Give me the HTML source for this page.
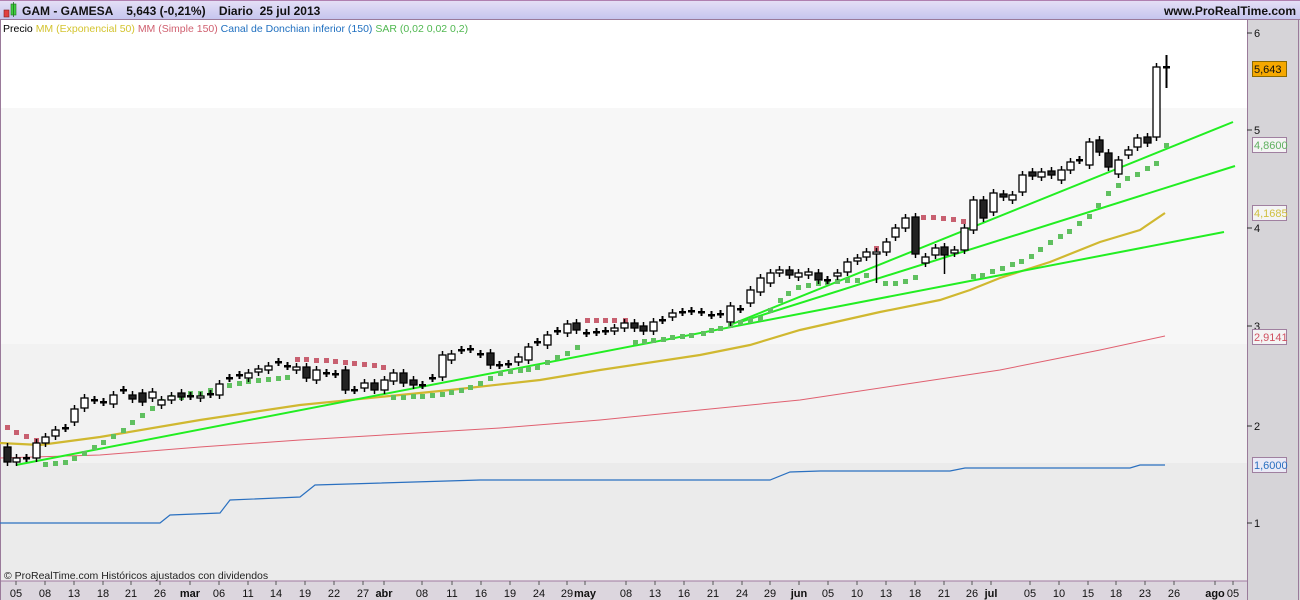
<!DOCTYPE html>
<html><head><meta charset="utf-8"><style>
html,body{margin:0;padding:0;width:1300px;height:600px;overflow:hidden;background:#fff;font-family:"Liberation Sans",Arial,sans-serif}
svg{display:block}
</style></head><body>
<svg id="s" width="1300" height="600" xmlns="http://www.w3.org/2000/svg" font-family="Liberation Sans, Arial, sans-serif">
<defs><linearGradient id="tb" x1="0" y1="0" x2="0" y2="1"><stop offset="0" stop-color="#e6e0f6"/><stop offset="1" stop-color="#c4c4ee"/></linearGradient></defs>
<rect x="0" y="0" width="1300" height="600" fill="#d6d4d8"/>
<rect x="0" y="20" width="1247" height="88" fill="#ffffff"/>
<rect x="0" y="108" width="1247" height="236" fill="#f7f7f7"/>
<rect x="0" y="344" width="1247" height="119" fill="#f2f2f2"/>
<rect x="0" y="463" width="1247" height="118" fill="#ebebeb"/>
<rect x="0" y="581" width="1247" height="19" fill="#dcd6de"/>
<line x1="0" y1="581" x2="1247" y2="581" stroke="#a07aa0"/>
<line x1="1247.5" y1="20" x2="1247.5" y2="600" stroke="#9a7a9a"/>
<line x1="0.5" y1="20" x2="0.5" y2="600" stroke="#9a7a9a"/>
<line x1="1298.5" y1="0" x2="1298.5" y2="600" stroke="#9a7a9a"/>
<rect x="0" y="0" width="1300" height="20" fill="url(#tb)"/>
<line x1="0" y1="0.5" x2="1300" y2="0.5" stroke="#b080b0"/>
<line x1="0" y1="19.5" x2="1300" y2="19.5" stroke="#9a7a9a"/>
<rect x="4" y="10" width="5" height="7" fill="#e04040" stroke="#802020" stroke-width="0.6"/>
<rect x="11" y="4" width="5" height="11" fill="#40d040" stroke="#207020" stroke-width="0.6"/>
<line x1="13.5" y1="2" x2="13.5" y2="17" stroke="#207020" stroke-width="0.8"/>
<text x="22" y="15" font-size="12" font-weight="bold" fill="#111">GAM - GAMESA &#160;&#160; 5,643 (-0,21%) &#160;&#160; Diario &#160;25 jul 2013</text>
<text x="1296" y="15" font-size="12" font-weight="bold" fill="#111" text-anchor="end">www.ProRealTime.com</text>
<text x="3" y="32" font-size="10.5"><tspan fill="#000">Precio </tspan><tspan fill="#d4c430">MM (Exponencial 50) </tspan><tspan fill="#d06070">MM (Simple 150) </tspan><tspan fill="#2070c0">Canal de Donchian inferior (150) </tspan><tspan fill="#50b850">SAR (0,02 0,02 0,2)</tspan></text>
<text x="4" y="579" font-size="10.5" fill="#222">© ProRealTime.com  Históricos ajustados con dividendos</text>
<g id="g"></g>
</svg>
<script>
var g=document.getElementById('g'),h='';
function pl(p,c,w){h+='<polyline fill="none" stroke="'+c+'" stroke-width="'+w+'" points="'+p+'"/>';}
pl("0,523 160,523 170,515 220,513 230,500 300,497 315,485 480,480 770,480 790,472 820,471 950,471 965,468 1130,468 1140,465 1165,465","#2a70c0",1.2);
pl("0,458 100,455 200,447 300,440 400,434 500,428 600,420 700,410 800,400 900,385 1000,370 1050,360 1100,350 1165,336","#e06070",1);
pl("0,443 40,445 100,437 200,420 300,405 400,395 450,390 540,380 600,370 700,355 750,345 800,330 880,312 940,300 970,290 1000,278 1050,262 1100,242 1140,230 1165,213","#d0b830",2.2);
h+='<line x1="16" y1="465" x2="1224" y2="232" stroke="#22ee22" stroke-width="2"/>';
h+='<line x1="730" y1="325" x2="1233" y2="122" stroke="#22ee22" stroke-width="2"/>';
h+='<line x1="740" y1="322" x2="1235" y2="166" stroke="#22ee22" stroke-width="2"/>';
var red=[[7,427],[16,432],[26,436],[36,440],[297,359],[306,359],[316,360],[326,360],[335,361],[345,362],[354,363],[364,364],[374,365],[383,367],[587,320],[596,320],[605,320],[614,320],[625,320],[876,248],[923,217],[933,217],[943,218],[953,219],[963,221]];
var gr=[[45,464],[55,463],[65,462],[74,458],[84,453],[94,447],[103,442],[113,436],[123,430],[132,422],[142,415],[152,408],[161,401],[171,397],[181,397],[190,393],[200,393],[210,390],[219,387],[229,385],[239,383],[248,381],[258,380],[268,379],[278,378],[287,377],[393,397],[403,397],[413,396],[422,396],[432,395],[442,394],[451,392],[461,390],[470,387],[480,383],[490,378],[500,373],[510,371],[520,370],[528,369],[537,367],[547,362],[557,357],[567,353],[577,347],[635,342],[644,341],[653,340],[663,339],[672,337],[682,336],[691,335],[703,333],[711,330],[720,328],[730,325],[740,322],[750,320],[760,318],[770,310],[780,300],[788,293],[798,287],[808,285],[818,283],[827,282],[837,281],[847,280],[857,280],[866,275],[885,283],[895,283],[905,281],[915,277],[973,276],[982,275],[992,271],[1002,268],[1012,264],[1021,261],[1031,256],[1040,249],[1050,242],[1060,236],[1069,231],[1079,223],[1089,216],[1098,205],[1108,193],[1118,185],[1127,178],[1137,174],[1147,168],[1156,163],[1166,145]];
red.forEach(function(d){h+='<rect x="'+(d[0]-2)+'" y="'+(d[1]-2)+'" width="5" height="5" fill="#c86070"/>';});
gr.forEach(function(d){h+='<rect x="'+(d[0]-2)+'" y="'+(d[1]-2)+'" width="5" height="5" fill="#60c060"/>';});
// candles: x, top, bottom, type (w/b/c)
var c=[[7,447,462,'b'],[16,458,462,'w'],[26,458,458,'c'],[36,443,458,'w'],[45,437,443,'w'],[55,430,436,'w'],[65,428,428,'c'],[74,409,422,'w'],[84,398,408,'w'],[94,400,400,'c'],[103,402,402,'c'],[113,395,404,'w'],[123,390,390,'c'],[132,395,399,'b'],[142,393,402,'b'],[152,392,398,'w'],[161,400,405,'w'],[171,396,400,'w'],[181,393,397,'b'],[190,396,396,'c'],[200,396,398,'w'],[210,394,394,'c'],[219,384,395,'w'],[229,378,378,'c'],[239,375,375,'c'],[248,373,378,'w'],[258,369,372,'w'],[268,366,370,'w'],[278,362,362,'c'],[287,366,366,'c'],[296,367,370,'w'],[306,367,378,'b'],[316,370,380,'w'],[326,373,373,'c'],[335,374,374,'c'],[345,370,390,'b'],[354,390,390,'c'],[364,383,388,'w'],[374,383,390,'b'],[384,380,390,'w'],[393,373,381,'w'],[403,373,383,'b'],[413,380,385,'b'],[422,385,385,'c'],[432,378,378,'c'],[442,355,377,'w'],[451,354,360,'w'],[461,350,350,'c'],[470,349,349,'c'],[480,354,354,'c'],[490,353,365,'b'],[499,365,365,'c'],[508,364,364,'c'],[518,357,362,'w'],[528,347,360,'w'],[537,342,342,'c'],[547,335,345,'w'],[557,331,331,'c'],[567,324,333,'w'],[576,323,330,'b'],[586,333,333,'c'],[596,332,332,'c'],[605,331,331,'c'],[614,328,331,'w'],[624,323,328,'w'],[634,323,328,'b'],[643,326,331,'b'],[653,322,331,'w'],[662,320,320,'c'],[672,313,317,'w'],[682,312,312,'c'],[691,311,311,'c'],[701,312,312,'c'],[711,315,315,'c'],[720,314,314,'c'],[730,306,322,'w'],[740,309,309,'c'],[750,290,303,'w'],[760,278,292,'w'],[770,273,283,'w'],[779,270,273,'w'],[789,270,275,'b'],[798,273,277,'w'],[808,272,275,'w'],[818,273,280,'b'],[827,280,280,'c'],[837,273,276,'w'],[847,262,272,'w'],[857,258,261,'w'],[866,252,257,'w'],[876,252,254,'w'],[886,242,252,'w'],[895,228,237,'w'],[905,218,228,'w'],[915,217,254,'b'],[925,257,263,'w'],[935,248,255,'w'],[944,247,255,'b'],[954,250,253,'w'],[964,228,250,'w'],[973,200,230,'w'],[983,200,218,'b'],[993,193,212,'w'],[1003,194,197,'b'],[1012,195,200,'w'],[1022,175,192,'w'],[1032,172,176,'b'],[1041,172,177,'w'],[1051,171,175,'b'],[1061,170,180,'w'],[1070,162,170,'w'],[1079,160,160,'c'],[1089,142,165,'w'],[1099,140,152,'b'],[1108,153,167,'b'],[1118,160,174,'w'],[1128,150,155,'w'],[1137,138,147,'w'],[1147,137,143,'b'],[1156,67,137,'w'],[1166,67,67,'c']];
c.forEach(function(d){var x=d[0],t=d[1],b=d[2];var wt=t-4,wb=b+4;if(x==876)wb=283;if(x==1166){wt=55;wb=88;}if(x==915)wb=258;if(x==944)wb=274;
h+='<line x1="'+(x+0.5)+'" y1="'+wt+'" x2="'+(x+0.5)+'" y2="'+wb+'" stroke="#000" stroke-width="'+(d[3]=='c'?2:1.5)+'"/>';
if(d[3]=='c')h+='<rect x="'+(x-3)+'" y="'+(t-1)+'" width="7" height="2.5" fill="#000"/>';
else h+='<rect x="'+(x-3)+'" y="'+t+'" width="7" height="'+Math.max(b-t,2)+'" fill="'+(d[3]=='w'?'#fff':'#222')+'" stroke="#000" stroke-width="1.3"/>';});
// right axis
[[6,33],[5,130],[4,228],[3,326],[2,426],[1,523]].forEach(function(a){h+='<line x1="1247" y1="'+a[1]+'" x2="1252" y2="'+a[1]+'" stroke="#333"/><text x="1254" y="'+(a[1]+4)+'" font-size="11" fill="#111">'+a[0]+'</text>';});
[[ '5,643',61,'#f5a800','#8a6a00','#111'],['4,8600',137,'#f4f4f4','#a080a0','#60b060'],['4,1685',205,'#f4f4f4','#a080a0','#d0c040'],['2,9141',329,'#f4f4f4','#a080a0','#d05060'],['1,6000',457,'#eaeaf6','#a080a0','#2a70c0']].forEach(function(b){h+='<rect x="1252.5" y="'+b[1]+'.5" width="34" height="15" fill="'+b[2]+'" stroke="'+b[3]+'"/><text x="1254" y="'+(b[1]+12)+'" font-size="11" fill="'+b[4]+'">'+b[0]+'</text>';});
// bottom axis
var L=[['05',16],['08',45],['13',74],['18',103],['21',131],['26',160],['mar',190,1],['06',219],['11',248],['14',276],['19',305],['22',334],['27',363],['abr',384,1],['08',422],['11',452],['16',481],['19',510],['24',539],['29',567],['may',585,1],['08',626],['13',655],['16',684],['21',713],['24',742],['29',770],['jun',799,1],['05',828],['10',857],['13',886],['18',915],['21',944],['26',972],['jul',991,1],['05',1030],['10',1059],['15',1088],['18',1116],['23',1145],['26',1174],['ago',1215,1],['05',1233]];
L.forEach(function(l){h+='<line x1="'+l[1]+'" y1="581" x2="'+l[1]+'" y2="585" stroke="#555"/><text x="'+l[1]+'" y="597" font-size="11" text-anchor="middle" fill="#111"'+(l[2]?' font-weight="bold"':'')+'>'+l[0]+'</text>';});
g.innerHTML=h;
</script>
</body></html>
